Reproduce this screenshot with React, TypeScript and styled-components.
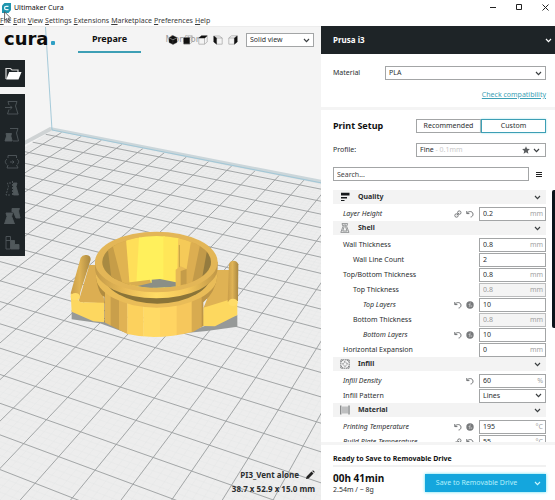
import React, { useState } from "react";
import styled, { createGlobalStyle, css } from "styled-components";

const GlobalStyle = createGlobalStyle`
  *, *::before, *::after { box-sizing: border-box; }
  body { margin: 0; background: #fff; }
  body, button, input, select {
    font-family: "Noto Sans", "Open Sans", sans-serif;
    font-size: 7px;
    line-height: 10px;
    color: #2b2e30;
  }
  button { padding: 0; border: 0; background: none; }
  svg { display: block; flex: none; }
`;

const INK = "#1e2427";
const LINE = "#a3a5a6";
const TEAL = "#3d9fb5";

/* ---------- window frame ---------- */

const Window = styled.div`
  display: flex;
  flex-direction: column;
  height: 100vh;
  overflow: hidden;
`;

const TitleBar = styled.header`
  position: relative;
  display: flex;
  align-items: center;
  gap: 3px;
  height: 14px;
  padding: 1px 6px 0 2px;
`;

const AppTitle = styled.span`
  flex: 1;
  color: #111;
`;

const WindowButtons = styled.div`
  display: flex;
  gap: 19px;
`;

const WindowButton = styled.button`
  width: 7px;
  height: 7px;
`;

const Cursor = styled.svg`
  position: absolute;
  left: 4px;
  top: 11px;
  z-index: 3;
`;

const MenuBar = styled.nav`
  display: flex;
  gap: 2px;
  height: 12px;
  padding-top: 2px;
  align-items: center;
`;

const MenuItem = styled.button`
  color: #3a3a3a;
  &::first-letter { text-decoration: underline; }
`;

const Main = styled.div`
  display: grid;
  grid-template-columns: minmax(0, 1fr) 234px;
  flex: 1;
  min-height: 0;
`;

/* ---------- 3D view ---------- */

const Viewport = styled.main`
  position: relative;
  display: flex;
  flex-direction: column;
  overflow: hidden;
  background: #f4f4f4;
  border-top: 1px solid #ececec;
`;

const Scene = styled.svg`
  position: absolute;
  inset: 0;
  width: 100%;
  height: 100%;
`;

const StageBar = styled.div`
  position: relative;
  display: flex;
  align-items: center;
  height: 26px;
  padding: 0 7px 0 4px;
`;

const Logo = styled.div`
  display: flex;
  align-items: baseline;
  gap: 2px;
  width: 74px;
  font: bold 18px/20px "DejaVu Sans", sans-serif;
  color: #0c0c0c;
  padding-bottom: 2px;
  &::after {
    content: "";
    width: 4px;
    height: 4px;
    border-radius: 1px;
    background: #2f9fc4;
  }
`;

const StageTab = styled.button<{ $active?: boolean }>`
  width: 63px;
  height: 26px;
  margin-right: 10px;
  font-size: 9px;
  font-weight: ${(p) => (p.$active ? 700 : 400)};
  color: ${(p) => (p.$active ? "#111" : "#9a9a9a")};
  border-bottom: 2px solid ${(p) => (p.$active ? TEAL : "transparent")};
`;

const CameraBar = styled.div`
  position: absolute;
  top: 6px;
  right: 7px;
  display: flex;
  align-items: center;
  gap: 8px;
`;

const CubeGroup = styled.div`
  display: flex;
  gap: 5px;
`;

const ToolColumn = styled.div`
  position: relative;
  display: flex;
  flex-direction: column;
  width: 25px;
  margin-top: 7px;
  background: ${INK};
`;

const ToolButton = styled.button`
  display: grid;
  place-items: center;
  height: 27px;
`;

const ModelInfo = styled.div`
  position: relative;
  display: flex;
  flex-direction: column;
  align-items: flex-end;
  gap: 4px;
  margin-top: auto;
  padding: 0 6px 6px 0;
  font-weight: 700;
  font-size: 8px;
`;

const ModelName = styled.div`
  display: flex;
  gap: 6px;
`;

/* ---------- shared controls ---------- */

const SelectBox = styled.div<{ $width?: number }>`
  display: grid;
  grid-template-columns: 1fr 14px;
  align-items: center;
  width: ${(p) => (p.$width ? p.$width + "px" : "100%")};
  height: 14px;
  border: 1px solid ${LINE};
  background: #fff;
  > svg { grid-area: 1 / 2; justify-self: center; pointer-events: none; }
`;

const NativeSelect = styled.select`
  grid-area: 1 / 1 / 2 / 3;
  width: 100%;
  height: 12px;
  padding: 0 3px;
  border: 0;
  appearance: none;
  background: transparent;
`;

/* ---------- sidebar ---------- */

const Sidebar = styled.aside`
  display: flex;
  flex-direction: column;
  gap: 3px;
  min-height: 0;
  background: #f4f4f4;
`;

const Panel = styled.section`
  background: #fff;
  padding: 0 9px 0 12px;
`;

const PrinterButton = styled.button`
  display: flex;
  justify-content: space-between;
  align-items: center;
  width: 100%;
  height: 28px;
  padding: 0 3px 0 12px;
  background: ${INK};
  color: #fff;
  font-size: 8px;
  font-weight: 700;
`;

const PrinterPanel = styled.div`
  background: #fff;
`;

const MaterialArea = styled.div`
  display: flex;
  flex-direction: column;
  align-items: flex-end;
  gap: 10px;
  height: 53px;
  padding: 12px 9px 0 12px;
`;

const MaterialRow = styled.div`
  display: grid;
  grid-template-columns: 52px 1fr;
  align-items: center;
  width: 100%;
`;

const Link = styled.a`
  color: ${TEAL};
  text-decoration: underline;
`;

const SetupPanel = styled(Panel)`
  display: flex;
  flex-direction: column;
  flex: 1;
  min-height: 0;
  padding: 9px 0 0 12px;
`;

const SetupRow = styled.div`
  display: grid;
  grid-template-columns: 1fr 130px;
  align-items: center;
  height: 14px;
  margin: 0 9px 10px 0;
`;

const Heading = styled.h2`
  margin: 0;
  font-size: 9px;
  line-height: 14px;
  color: #111;
`;

const ModeSwitch = styled.div`
  display: grid;
  grid-template-columns: 1fr 1fr;
`;

const ModeButton = styled.button<{ $active?: boolean }>`
  height: 14px;
  border: 1px solid ${LINE};
  ${(p) =>
    p.$active &&
    css`
      border-color: ${TEAL};
      box-shadow: 0 0 2px #9fe3ea;
    `}
`;

const ProfileButton = styled.button`
  display: flex;
  align-items: center;
  gap: 3px;
  height: 14px;
  padding: 0 5px 0 3px;
  border: 1px solid ${LINE};
  > svg:first-of-type { margin-left: auto; }
`;

const Faint = styled.span`
  color: #c9c9c9;
`;

const SearchRow = styled.div`
  display: grid;
  grid-template-columns: 1fr 14px;
  align-items: center;
  justify-items: end;
  margin: 0 12px 9px 0;
  height: 14px;
`;

const SearchInput = styled.input`
  width: 100%;
  height: 14px;
  padding: 0 3px;
  border: 1px solid ${LINE};
  &::placeholder { color: #444; }
`;

const SettingsArea = styled.div`
  display: grid;
  grid-template-columns: 1fr 3px;
  gap: 6px;
  flex: 1;
  min-height: 0;
  overflow: hidden;
`;

const SettingsList = styled.div`
  min-height: 0;
`;

const ScrollThumb = styled.div`
  height: 138px;
  border-radius: 2px 0 0 2px;
  background: #0b141a;
`;

const GroupHeader = styled.button`
  display: grid;
  grid-template-columns: 25px 1fr 14px;
  align-items: center;
  width: 100%;
  height: 14px;
  margin-bottom: 2px;
  padding: 0 2px 0 0;
  background: #f3f3f3;
  text-align: left;
  font-weight: 700;
  > svg:first-child { margin-left: 7px; }
  > svg:last-child { justify-self: center; }
`;

const SettingRow = styled.div<{ $depth: number }>`
  display: grid;
  grid-template-columns: 1fr auto 67px;
  align-items: center;
  gap: 5px;
  height: 15px;
  padding-left: ${(p) => 10 + p.$depth * 10}px;
`;

const SettingLabel = styled.label<{ $changed?: boolean }>`
  font-style: ${(p) => (p.$changed ? "italic" : "normal")};
  white-space: nowrap;
`;

const RowIcons = styled.div`
  display: flex;
  gap: 4px;
`;

const ValueBox = styled.div<{ $disabled?: boolean }>`
  display: flex;
  align-items: center;
  height: 14px;
  padding: 0 2px 0 3px;
  border: 1px solid ${(p) => (p.$disabled ? "#bbbcbd" : LINE)};
  background: ${(p) => (p.$disabled ? "#f4f4f4" : "#fff")};
`;

const ValueInput = styled.input`
  flex: 1;
  min-width: 0;
  height: 12px;
  padding: 0;
  border: 0;
  background: transparent;
  &:disabled { color: #999; }
`;

const Unit = styled.span`
  color: #a2a2a2;
`;

const Footer = styled(Panel)`
  height: 55px;
  padding-top: 9px;
`;

const FooterTitle = styled.div`
  padding-bottom: 1px;
  border-bottom: 2px solid #f1f1f1;
  font-weight: 700;
  color: #111;
`;

const FooterRow = styled.div`
  display: flex;
  justify-content: space-between;
  align-items: center;
  padding-top: 4px;
`;

const PrintTime = styled.div`
  font-size: 10px;
  line-height: 14px;
  font-weight: 700;
  color: #111;
`;

const SaveButton = styled.button`
  display: grid;
  grid-template-columns: 1fr 18px;
  align-items: center;
  justify-items: center;
  width: 121px;
  height: 18px;
  background: #14a6dd;
  box-shadow: 0 0 3px #5fe0f0;
  color: #b4f0fb;
`;

/* ---------- icons ---------- */

const Chevron = ({ color = "#3b3f41" }: { color?: string }) => (
  <svg width="7" height="5" viewBox="0 0 7 5" fill="none" stroke={color} strokeWidth="1.2">
    <path d="M1 1 3.500 3.600 6 1" />
  </svg>
);

const UndoIcon = () => (
  <svg width="8" height="8" viewBox="0 0 8 8" fill="none" stroke="#6d7072">
    <path d="M.8 1v2.600h2.600M1 3.400C2.500.8 6.800.9 7 4.200 7 5.800 6 6.900 4.600 7" />
  </svg>
);

const LinkIcon = () => (
  <svg width="8" height="8" viewBox="0 0 8 8" fill="none" stroke="#77797b">
    <circle cx="2.500" cy="5.500" r="1.700" />
    <circle cx="5.300" cy="2.600" r="1.700" />
    <path d="M2.800 5.200 5 2.900" />
  </svg>
);

const FormulaIcon = () => (
  <svg width="8" height="8" viewBox="0 0 8 8">
    <circle cx="4" cy="4" r="3.700" fill="#77797b" />
    <path d="M4.800 1.800C3.500 1.600 3.800 3 3.300 6.200M2.500 3.500h2M4.600 4.300l1.300 1.500M5.900 4.300 4.600 5.800" fill="none" stroke="#d5d5d5" strokeWidth=".6" />
  </svg>
);

const rowIcons = { link: LinkIcon, undo: UndoIcon, formula: FormulaIcon };

const QualityIcon = () => (
  <svg width="10" height="10" viewBox="0 0 10 10" fill="#16191b">
    <path d="M1 .8h8.500v2.600H1zM1 5h6v1.600H1zM1 8h3.500v1H1z" />
  </svg>
);

const ShellIcon = () => (
  <svg width="10" height="10" viewBox="0 0 10 10" fill="none" stroke="#7d8082" strokeWidth=".8">
    <path d="M2 .6h5.600L6.700 3.500 9 9.400H.8L3 3.500zM3.600 2 4.200 3.600 2.700 8h4.400L5.500 3.600 6 2z" />
  </svg>
);

const InfillIcon = () => (
  <svg width="10" height="10" viewBox="0 0 10 10" fill="none" stroke="#5d6062" strokeWidth=".8">
    <path d="M.8.8h8.400v8.400H.8zM3 .8.8 3M7 .8 9.200 3M.8 7 3 9.200M9.200 7 7 9.200M5 2.500 7.500 5 5 7.500 2.500 5z" strokeDasharray="1.600 .5" />
  </svg>
);

const MaterialIcon = () => (
  <svg width="10" height="10" viewBox="0 0 10 10" fill="none" stroke="#5d6062">
    <path d="M.8.500v9M9 .500v9" />
    <path d="M3 1.500v7M5 1.500v7M7 1.500v7" strokeWidth=".7" />
  </svg>
);

const faces: Record<string, string[]> = {
  home: ["M1 3 5 5v4.500L1 7.500z", "M9 3 5 5v4.500l4-2z", "M1 2.600 5 .6l4 2-4 2z"],
  front: ["M.8 2.800h5.700v6H.8z"],
  top: ["M.8 3 3.500.8H9.200L6.800 3z"],
  left: ["M.8 1 3.600 3v6.200L.8 7z"],
  right: ["M6.400 3 9.200.9V7L6.400 9.200z"],
};

const CubeIcon = ({ face }: { face: string }) => (
  <svg width="10" height="10" viewBox="0 0 10 10" fill="none" stroke="#a5a5a5" strokeWidth=".7">
    {face === "left" && <path d="M.8 1h5.500l2.900 2v6.200H3.600L.8 7zM3.600 3h5.600" />}
    {(face === "front" || face === "top" || face === "right") && (
      <path d="M.8 3 3.500.8h5.700V7L6.500 9.200H.8zM.8 3h5.700l2.700-2.200M6.500 3v6.200" />
    )}
    {faces[face].map((d) => (
      <path key={d} d={d} fill="#111" stroke={face === "home" ? "#555" : "#111"} strokeWidth=".3" />
    ))}
  </svg>
);

const CuraBadge = () => (
  <svg width="9" height="10" viewBox="0 0 9 10">
    <path d="M2.500 0H9v7L6.500 10H0V2.500z" fill="#1f95ae" />
    <path d="M6.500 3.300H4.300C3 3.300 2.500 4 2.500 5s.5 1.700 1.800 1.700h2.200" fill="none" stroke="#e9f8fb" strokeWidth="1.200" />
  </svg>
);

const FolderIcon = () => (
  <svg width="18" height="14" viewBox="0 0 18 14">
    <path d="M2 12V1.500h4.500L8 3h6v2" fill="none" stroke="#d6d6d6" strokeWidth="1.200" />
    <path d="M5.200 5H17.500l-3 7.600H2.200z" fill="#fff" />
  </svg>
);

const toolShapes: { name: string; shape: React.ReactNode }[] = [
  { name: "Move", shape: <path d="M4 1.500h9L11.500 6 14 14H3.500L5 9.500M4 1.500 5 5M1 7.500h7M6.300 5.800 8 7.500 6.300 9.200" /> },
  {
    name: "Scale",
    shape: (
      <>
        <path d="M6 1.500h8L12.500 6 14.500 14H9" />
        <path d="M2 6.500h5.500L6.800 9l1.400 5H1l1.600-5z" fill="#50585b" />
      </>
    ),
  },
  { name: "Rotate", shape: <path d="M4 4V1.500h8.500V4M4 11l-1 3h11l-1.500-3M3 5C.5 7 1 9 3 10.500M13 5c2.500 2 2 4 0 5.500M6 8h4M8.500 6.500 10 8 8.500 9.500" /> },
  {
    name: "Mirror",
    shape: (
      <>
        <path d="M7 2H3.500l1 3.500L2 14h5M8.500 0v15" strokeDasharray="2 1" />
        <path d="M9.500 2H13l-1 3.500 2.500 8.500h-5z" fill="#50585b" />
      </>
    ),
  },
  {
    name: "Per model settings",
    shape: (
      <>
        <path d="M8 .5h7.500l-1 2.500L16 10h-4L9.500 4H8z" fill="#50585b" />
        <path d="M2 5h6.500L7.700 8.500 10.500 16H.5L3 8.500z" fill="#50585b" />
      </>
    ),
  },
  {
    name: "Support blocker",
    shape: (
      <>
        <path d="M2 1.500h4.500V14H2zM2 5.500h4.500" />
        <path d="M7 5.500h3.500v4H15V14H7z" fill="#50585b" />
      </>
    ),
  },
];

/* ---------- build plate ---------- */

const project = (u: number, v: number) => {
  const w = 1 - 0.010417 * u - 0.019345 * v;
  const x = (52 + 18.746 * u - 13.474 * v) / w;
  const y = (130.5 + 2.429 * u + 5.08 * v) / w;
  return `${x.toFixed(1)} ${y.toFixed(1)}`;
};

const gridPath = (start: number, step: number) => {
  let d = "";
  for (let u = start; u < 45; u += step) {
    d += `M${project(u, 0)}L${project(u, (0.7 - 0.010417 * u) / 0.019345)}`;
  }
  for (let v = start; v < 34; v += step) {
    d += `M${project(0, v)}L${project((0.7 - 0.019345 * v) / 0.010417, v)}`;
  }
  return d;
};

const fineGrid = gridPath(0.1, 0.2);
const mainGrid = gridPath(0.5, 1);

const bodyFacets = [
  [137, 165, "#b08c40"], [165, 182, "#e2b555"], [182, 207, "#c99f4b"], [207, 232, "#e0b254"],
  [232, 280, "#fcd15d"], [280, 330, "#ffda65"], [330, 380, "#ffd462"], [380, 425, "#f6c75c"],
  [425, 455, "#d8ab50"], [455, 503, "#bd9547"],
] as const;

const innerFacets = [
  ["155,60 180,90 205,240 155,240", "#a88a42"],
  ["172,90 190,75 245,225 190,235", "#c69d48"],
  ["185,80 232,60 262,220 225,235", "#e0b351"],
  ["228,72 272,55 268,215 240,225", "#ffdf59"],
  ["268,50 345,50 345,225 258,225", "#fff05c"],
  ["340,50 388,55 385,225 340,225", "#ffe658"],
  ["385,55 428,70 405,225 380,225", "#f5ca58"],
  ["425,65 455,85 425,235 400,225", "#dcae51"],
  ["452,80 478,100 455,235 420,235", "#c29a49"],
  ["474,90 495,120 485,240 448,235", "#947b3f"],
];

const Model = () => (
  <g transform="translate(50 215) scale(.33333)">
    <path d="M65 285 180 322 240 358 150 325 65 313zM400 355 562 300V335L470 348z" fill="#969998" />
    <path d="M85 262 118 150H140L165 265z" fill="#dcae52" />
    <path d="M62 235 92 262 162 263V322L130 319 65 290z" fill="#fdd75f" />
    <path d="M62 235 92 128Q98 118 110 120 123 122 122 134L91 232 88 255z" fill="url(#peg)" />
    <ellipse cx="76" cy="245" rx="14" ry="11" fill="#ffdc68" />
    <path d="M495 165H538V262L460 280 480 230z" fill="#dfb254" />
    <path d="M460 278 535 255H562V300L495 334 458 333z" fill="#fdd85f" />
    <path d="M537 148Q540 137 550 137 562 138 565 148L564 258 533 260z" fill="url(#peg)" />
    <ellipse cx="549" cy="262" rx="14" ry="11" fill="#ffdc68" />
    <clipPath id="body">
      <path d="M137 180Q145 240 163 245L163 322 232 357Q320 378 430 350L460 333V262Q495 235 503 180z" />
    </clipPath>
    <g clipPath="url(#body)">
      {bodyFacets.map(([a, b, fill]) => (
        <rect key={a} x={a} y="170" width={b - a + 1} height="210" fill={fill} />
      ))}
      <ellipse cx="320" cy="180" rx="184" ry="98" fill="#e9bc58" />
      <ellipse cx="322" cy="170" rx="165" ry="96" fill="#8a7438" />
    </g>
    <path d="M135 141V159A184 91 0 0 0 503 159V141z" fill="url(#band)" />
    <ellipse cx="319" cy="141" rx="184" ry="91" fill="#e3b657" />
    <clipPath id="bore">
      <ellipse cx="320" cy="141" rx="163" ry="78" />
    </clipPath>
    <g clipPath="url(#bore)">
      <rect x="150" y="50" width="350" height="180" fill="#d4a84e" />
      {innerFacets.map(([points, fill]) => (
        <polygon key={points} points={points} fill={fill} />
      ))}
      <path d="M205 206 300 194 310 222H220z" fill="#d9ae50" />
      <path d="M305 194 330 192 378 202V217L300 219 260 214 305 203z" fill="#8b8f86" />
      <path d="M388 90V160" stroke="#a58b3c" strokeWidth="2" />
      <path d="M377 164 392 154 410 162V215H377z" fill="#e7b955" />
      <path d="M392 168 410 162V215H392z" fill="#c59c49" />
    </g>
  </g>
);

const BuildPlate = () => (
  <Scene viewBox="0 27 321 473" preserveAspectRatio="xMinYMin slice" role="img" aria-label="Build plate with model">
    <defs>
      <linearGradient id="peg">
        <stop offset="0" stopColor="#c99d49" />
        <stop offset=".45" stopColor="#dfb355" />
        <stop offset="1" stopColor="#a98741" />
      </linearGradient>
      <linearGradient id="band">
        <stop offset="0" stopColor="#c49b49" />
        <stop offset=".25" stopColor="#e9bb58" />
        <stop offset=".5" stopColor="#ffdb65" />
        <stop offset=".75" stopColor="#f3c65b" />
        <stop offset="1" stopColor="#c09747" />
      </linearGradient>
    </defs>
    <path d={`M${project(0, 0)}L${project(48, 0)} ${project(36, 16)} ${project(0, 36)}z`} fill="#ededed" />
    <path d={fineGrid} stroke="#e2e3e3" strokeWidth=".3" />
    <path d={mainGrid} stroke="#9b9e9f" strokeWidth=".9" />
    <path d="M52 130.500 0 158V154L50 127z" fill="#cfd3d4" />
    <path d="M50 127 322 180V184L52 130.500z" fill="#cbd6da" />
    <path d="M45.500 27 52 130 322 183" fill="none" stroke="#9cc5d6" strokeWidth=".9" />
    <Model />
  </Scene>
);

/* ---------- data ---------- */

type IconName = keyof typeof rowIcons;

interface Setting {
  label: string;
  value: string;
  unit?: string;
  depth?: number;
  changed?: boolean;
  disabled?: boolean;
  choice?: boolean;
  icons?: IconName[];
}

const groups: { title: string; Icon: () => React.ReactElement; settings: Setting[] }[] = [
  {
    title: "Quality",
    Icon: QualityIcon,
    settings: [{ label: "Layer Height", value: "0.2", unit: "mm", changed: true, icons: ["link", "undo"] }],
  },
  {
    title: "Shell",
    Icon: ShellIcon,
    settings: [
      { label: "Wall Thickness", value: "0.8", unit: "mm" },
      { label: "Wall Line Count", value: "2", depth: 1 },
      { label: "Top/Bottom Thickness", value: "0.8", unit: "mm" },
      { label: "Top Thickness", value: "0.8", unit: "mm", depth: 1, disabled: true },
      { label: "Top Layers", value: "10", depth: 2, changed: true, icons: ["undo", "formula"] },
      { label: "Bottom Thickness", value: "0.8", unit: "mm", depth: 1, disabled: true },
      { label: "Bottom Layers", value: "10", depth: 2, changed: true, icons: ["undo", "formula"] },
      { label: "Horizontal Expansion", value: "0", unit: "mm" },
    ],
  },
  {
    title: "Infill",
    Icon: InfillIcon,
    settings: [
      { label: "Infill Density", value: "60", unit: "%", changed: true, icons: ["undo"] },
      { label: "Infill Pattern", value: "Lines", choice: true },
    ],
  },
  {
    title: "Material",
    Icon: MaterialIcon,
    settings: [
      { label: "Printing Temperature", value: "195", unit: "°C", changed: true, icons: ["undo", "formula"] },
      { label: "Build Plate Temperature", value: "55", unit: "°C", changed: true, icons: ["link", "undo"] },
    ],
  },
];

const menus = ["File", "Edit", "View", "Settings", "Extensions", "Marketplace", "Preferences", "Help"];

const SettingField = ({ setting }: { setting: Setting }) => {
  const [value, setValue] = useState(setting.value);
  const id = setting.label.toLowerCase().replace(/\W+/g, "-");
  return (
    <SettingRow $depth={setting.depth ?? 0}>
      <SettingLabel htmlFor={id} $changed={setting.changed}>{setting.label}</SettingLabel>
      <RowIcons>
        {setting.icons?.map((name) => {
          const Icon = rowIcons[name];
          return <Icon key={name} />;
        })}
      </RowIcons>
      {setting.choice ? (
        <SelectBox>
          <NativeSelect id={id}><option>{setting.value}</option></NativeSelect>
          <Chevron />
        </SelectBox>
      ) : (
        <ValueBox $disabled={setting.disabled}>
          <ValueInput id={id} value={value} disabled={setting.disabled} onChange={(e) => setValue(e.target.value)} />
          {setting.unit && <Unit>{setting.unit}</Unit>}
        </ValueBox>
      )}
    </SettingRow>
  );
};

export default function App() {
  const [mode, setMode] = useState("Custom");
  return (
    <Window>
      <GlobalStyle />
      <TitleBar>
        <CuraBadge />
        <AppTitle>Ultimaker Cura</AppTitle>
        <WindowButtons>
          <WindowButton aria-label="Minimize">
            <svg width="7" height="7" stroke="#222"><path d="M0 3.500h6" /></svg>
          </WindowButton>
          <WindowButton aria-label="Maximize">
            <svg width="7" height="7" stroke="#222" fill="none"><path d="M.5.5h5v5h-5z" /></svg>
          </WindowButton>
          <WindowButton aria-label="Close">
            <svg width="7" height="7" stroke="#222"><path d="M.5.5l6 6M6.500.5l-6 6" /></svg>
          </WindowButton>
        </WindowButtons>
        <Cursor width="8" height="12" viewBox="0 0 8 12" fill="#fff" stroke="#444" strokeWidth=".8">
          <path d="M.6.8v8.600l2-1.800 1.400 3.200 1.300-.6L4 7.200h2.800z" />
        </Cursor>
      </TitleBar>
      <MenuBar>
        {menus.map((name) => <MenuItem key={name}>{name}</MenuItem>)}
      </MenuBar>
      <Main>
        <Viewport>
          <BuildPlate />
          <StageBar>
            <Logo>cura</Logo>
            <StageTab $active>Prepare</StageTab>
            <StageTab>Monitor</StageTab>
            <CameraBar>
              <CubeGroup>
                {Object.keys(faces).map((face) => (
                  <button key={face} aria-label={`${face} view`}><CubeIcon face={face} /></button>
                ))}
              </CubeGroup>
              <SelectBox $width={68}>
                <NativeSelect aria-label="View mode"><option>Solid view</option></NativeSelect>
                <Chevron />
              </SelectBox>
            </CameraBar>
          </StageBar>
          <ToolColumn>
            <ToolButton aria-label="Open file"><FolderIcon /></ToolButton>
          </ToolColumn>
          <ToolColumn>
            {toolShapes.map(({ name, shape }) => (
              <ToolButton key={name} aria-label={name}>
                <svg width="17" height="16" viewBox="0 0 17 16" fill="none" stroke="#50585b" strokeWidth=".9">{shape}</svg>
              </ToolButton>
            ))}
          </ToolColumn>
          <ModelInfo>
            <ModelName>
              PI3_Vent alone
              <svg width="10" height="10" viewBox="0 0 10 10" fill="#222">
                <path d="M1 9 1.600 6.400 6.500 1.500 8.500 3.500 3.600 8.400zM7.200.9 8 .2 9.800 2 9.100 2.800z" />
              </svg>
            </ModelName>
            <div>38.7 x 52.9 x 15.0 mm</div>
          </ModelInfo>
        </Viewport>
        <Sidebar>
          <PrinterPanel>
            <PrinterButton>Prusa i3<Chevron color="#fff" /></PrinterButton>
            <MaterialArea>
              <MaterialRow>
                <label htmlFor="material">Material</label>
                <SelectBox>
                  <NativeSelect id="material"><option>PLA</option></NativeSelect>
                  <Chevron />
                </SelectBox>
              </MaterialRow>
              <Link href="#compatibility">Check compatibility</Link>
            </MaterialArea>
          </PrinterPanel>
          <SetupPanel>
            <SetupRow>
              <Heading>Print Setup</Heading>
              <ModeSwitch>
                {["Recommended", "Custom"].map((name) => (
                  <ModeButton key={name} $active={mode === name} onClick={() => setMode(name)}>{name}</ModeButton>
                ))}
              </ModeSwitch>
            </SetupRow>
            <SetupRow>
              <label htmlFor="profile">Profile:</label>
              <ProfileButton id="profile" aria-haspopup="listbox">
                <span>Fine <Faint>- 0.1mm</Faint></span>
                <svg width="8" height="8" viewBox="0 0 8 8" fill="#5b5e60">
                  <path d="M4 .2 5.100 2.700 7.900 3 5.800 4.900 6.400 7.700 4 6.200 1.600 7.700 2.200 4.900.1 3 2.900 2.700z" />
                </svg>
                <Chevron />
              </ProfileButton>
            </SetupRow>
            <SearchRow>
              <SearchInput aria-label="Search settings" placeholder="Search..." />
              <button aria-label="Setting visibility">
                <svg width="8" height="7" stroke="#222"><path d="M1 1.500h6M1 3.500h6M1 5.500h6" /></svg>
              </button>
            </SearchRow>
            <SettingsArea>
              <SettingsList>
                {groups.map(({ title, Icon, settings }) => (
                  <React.Fragment key={title}>
                    <GroupHeader><Icon />{title}<Chevron /></GroupHeader>
                    {settings.map((s) => <SettingField key={s.label} setting={s} />)}
                  </React.Fragment>
                ))}
              </SettingsList>
              <ScrollThumb />
            </SettingsArea>
          </SetupPanel>
          <Footer>
            <FooterTitle>Ready to Save to Removable Drive</FooterTitle>
            <FooterRow>
              <div>
                <PrintTime>00h 41min</PrintTime>
                <div>2.54m / ~ 8g</div>
              </div>
              <SaveButton><span>Save to Removable Drive</span><Chevron color="#c9f6fd" /></SaveButton>
            </FooterRow>
          </Footer>
        </Sidebar>
      </Main>
    </Window>
  );
}
